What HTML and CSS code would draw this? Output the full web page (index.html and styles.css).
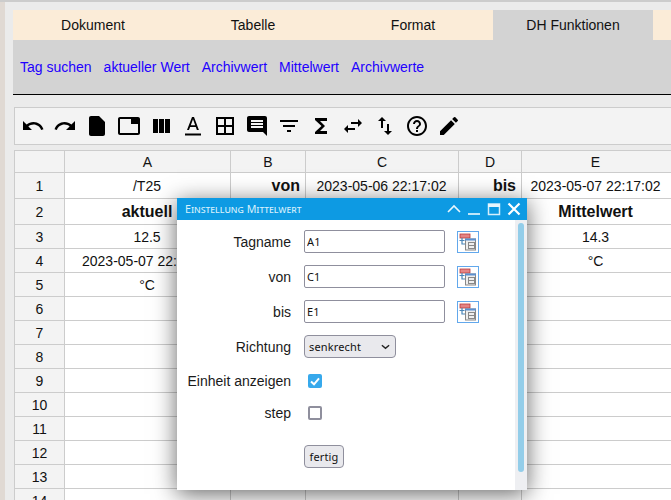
FILE: index.html
```html
<!DOCTYPE html>
<html lang="de">
<head>
<meta charset="utf-8">
<title>DH Funktionen</title>
<link rel="stylesheet" href="styles.css">
</head>
<body>
<div class="stripe"></div>
<main class="app">
  <nav class="tabs">
    <div class="tab">Dokument</div>
    <div class="tab">Tabelle</div>
    <div class="tab">Format</div>
    <div class="tab active">DH Funktionen</div>
  </nav>
  <div class="links">
    <a>Tag suchen</a><a>aktueller Wert</a><a>Archivwert</a><a>Mittelwert</a><a>Archivwerte</a>
  </div>
  <div class="toolbar">
    <svg class="ic" viewBox="0 0 24 24"><path d="M12.5 8c-2.65 0-5.05 1-6.9 2.6L2 7v9h9l-3.62-3.62c1.39-1.16 3.160-1.88 5.12-1.88 3.54 0 6.55 2.31 7.6 5.5l2.37-.78C21.08 11.03 17.15 8 12.5 8z"/></svg>
    <svg class="ic" viewBox="0 0 24 24"><path d="M18.4 10.6C16.55 9 14.15 8 11.5 8c-4.65 0-8.58 3.03-9.96 7.22L3.9 16c1.05-3.19 4.05-5.5 7.6-5.5 1.95 0 3.73.72 5.12 1.88L13 16h9V7l-3.6 3.6z"/></svg>
    <svg class="ic" viewBox="0 0 24 24"><path d="M14 2H6c-1.100 0-2 .9-2 2v16c0 1.100.9 2 2 2h12c1.100 0 2-.9 2-2V8l-6-6z"/></svg>
    <svg class="ic" viewBox="0 0 24 24"><path d="M21 3H3c-1.100 0-2 .9-2 2v14c0 1.100.9 2 2 2h18c1.100 0 2-.9 2-2V5c0-1.100-.9-2-2-2zm0 16H3V5h11v5h7v9z"/></svg>
    <svg class="ic" viewBox="0 0 24 24"><path d="M4 5h5v14H4zM10 5h5v14h-5zM16 5h5v14h-5z"/></svg>
    <svg class="ic" viewBox="0 0 24 24"><path d="M4 19.500h16v2H4z"/><path d="M11 3L6 16h2l1.100-3h5.700l1.100 3h2L13 3h-2zm-1.200 8.200L12 5.300l2.200 5.900H9.800z"/></svg>
    <svg class="ic" viewBox="0 0 24 24"><path d="M3 3v18h18V3H3zm8 16H5v-6h6v6zm0-8H5V5h6v6zm8 8h-6v-6h6v6zm0-8h-6V5h6v6z"/></svg>
    <svg class="ic" viewBox="0 0 24 24"><path d="M21.990 4c0-1.100-.89-2-1.990-2H4c-1.100 0-2 .9-2 2v12c0 1.100.9 2 2 2h14l4 4-.01-18zM18 14H6v-2h12v2zm0-3H6V9h12v2zm0-3H6V6h12v2z"/></svg>
    <svg class="ic" viewBox="0 0 24 24"><path d="M10 18h4v-2h-4v2zM3 6v2h18V6H3zm3 7h12v-2H6v2z"/></svg>
    <svg class="ic" viewBox="0 0 24 24"><path d="M18 4H6v2l6.500 6L6 18v2h12v-3h-7l5-5-5-5h7V4z"/></svg>
    <svg class="ic" viewBox="0 0 24 24"><path d="M6.990 11L3 15l3.990 4v-3H14v-2H6.990v-3zM21 9l-3.990-4v3H10v2h7.010v3L21 9z"/></svg>
    <svg class="ic" viewBox="0 0 24 24"><path d="M9 3L5 6.990h3V14h2V6.990h3L9 3zm7 14.010V10h-2v7.010h-3L15 21l4-3.990h-3z"/></svg>
    <svg class="ic" viewBox="0 0 24 24"><path d="M11 18h2v-2h-2v2zm1-16C6.480 2 2 6.480 2 12s4.480 10 10 10 10-4.480 10-10S17.520 2 12 2zm0 18c-4.410 0-8-3.590-8-8s3.590-8 8-8 8 3.590 8 8-3.590 8-8 8zm0-14c-2.210 0-4 1.790-4 4h2c0-1.100.9-2 2-2s2 .9 2 2c0 2-3 1.750-3 5h2c0-2.250 3-2.500 3-5 0-2.210-1.790-4-4-4z"/></svg>
    <svg class="ic" viewBox="0 0 24 24"><path d="M3 17.250V21h3.750L17.810 9.940l-3.750-3.750L3 17.250zM20.710 7.040a1 1 0 000-1.410l-2.340-2.340a1 1 0 00-1.410 0l-1.830 1.830 3.750 3.750 1.830-1.830z"/></svg>
  </div>
  <table class="sheet">
    <colgroup><col class="c0"><col class="c1"><col class="c2"><col class="c3"><col class="c4"><col class="c5"></colgroup>
    <tr class="hr"><th></th><th>A</th><th>B</th><th>C</th><th>D</th><th>E</th></tr>
    <tr class="r1"><th>1</th><td>/T25</td><td class="bold right">von</td><td>2023-05-06 22:17:02</td><td class="bold right">bis</td><td>2023-05-07 22:17:02</td></tr>
    <tr class="r2"><th>2</th><td class="bold">aktuell</td><td></td><td></td><td></td><td class="bold">Mittelwert</td></tr>
    <tr><th>3</th><td>12.5</td><td></td><td></td><td></td><td>14.3</td></tr>
    <tr><th>4</th><td>2023-05-07 22:17:02</td><td></td><td></td><td></td><td>°C</td></tr>
    <tr><th>5</th><td>°C</td><td></td><td></td><td></td><td></td></tr>
    <tr><th>6</th><td></td><td></td><td></td><td></td><td></td></tr>
    <tr><th>7</th><td></td><td></td><td></td><td></td><td></td></tr>
    <tr><th>8</th><td></td><td></td><td></td><td></td><td></td></tr>
    <tr><th>9</th><td></td><td></td><td></td><td></td><td></td></tr>
    <tr><th>10</th><td></td><td></td><td></td><td></td><td></td></tr>
    <tr><th>11</th><td></td><td></td><td></td><td></td><td></td></tr>
    <tr><th>12</th><td></td><td></td><td></td><td></td><td></td></tr>
    <tr><th>13</th><td></td><td></td><td></td><td></td><td></td></tr>
    <tr><th>14</th><td></td><td></td><td></td><td></td><td></td></tr>
  </table>
</main>
<section class="dialog">
  <header class="dlg-title">
    <span class="dlg-name">Einstellung Mittelwert</span>
    <svg class="wc" viewBox="0 0 16 16"><path d="M2 11l6-6 6 6" fill="none" stroke="#e8f6fd" stroke-width="1.600"/></svg>
    <svg class="wc" viewBox="0 0 16 16"><path d="M2 13h12" fill="none" stroke="#bfe6f9" stroke-width="2"/></svg>
    <svg class="wc" viewBox="0 0 16 16"><rect x="2.500" y="3" width="11" height="10.500" fill="none" stroke="#d5eefb" stroke-width="1.500"/><rect x="2" y="3" width="12" height="3" fill="#e8f6fd"/></svg>
    <svg class="wc" viewBox="0 0 16 16"><path d="M2.500 2.500l11 11M13.500 2.500l-11 11" fill="none" stroke="#fff" stroke-width="2.200"/></svg>
  </header>
  <div class="dlg-body">
    <form class="form">
      <label class="row"><span class="lab">Tagname</span><input class="txt" value="A1"><svg class="pick" viewBox="0 0 22 22"><use href="#pick"/></svg></label>
      <label class="row"><span class="lab">von</span><input class="txt" value="C1"><svg class="pick" viewBox="0 0 22 22"><use href="#pick"/></svg></label>
      <label class="row"><span class="lab">bis</span><input class="txt" value="E1"><svg class="pick" viewBox="0 0 22 22"><use href="#pick"/></svg></label>
      <label class="row"><span class="lab">Richtung</span><span class="sel">senkrecht<svg class="chev" viewBox="0 0 10 6"><path d="M1 1l4 3.500L9 1" fill="none" stroke="#222" stroke-width="1.600"/></svg></span></label>
      <label class="row chk"><span class="lab">Einheit anzeigen</span><span class="box on"><svg viewBox="0 0 14 14"><path d="M3 7.500l3 2.800 5-6" fill="none" stroke="#fff" stroke-width="2"/></svg></span></label>
      <label class="row chk2"><span class="lab">step</span><span class="box"></span></label>
      <div class="row act"><span class="lab"></span><button class="btn" type="button">fertig</button></div>
    </form>
    <div class="track"><div class="thumb"></div></div>
  </div>
</section>
<svg class="defs" width="0" height="0"><defs><g id="pick">
  <rect x=".5" y=".5" width="21" height="21" fill="#fff" stroke="#62a8ec"/>
  <rect x="3" y="3" width="10" height="4" fill="#e58585" stroke="#b93a3a" stroke-width=".8"/>
  <path d="M2.500 9.500h5M5 7v6h3" fill="none" stroke="#4a86b8" stroke-width="1.200"/>
  <rect x="8.500" y="8" width="10" height="11" fill="#eee" stroke="#888"/>
  <rect x="8" y="7.500" width="11" height="2" fill="#5b8fd0"/>
  <rect x="11.500" y="11.500" width="6" height="6" fill="none" stroke="#888"/>
  <path d="M11.500 14.500h6" stroke="#888" stroke-width="1"/>
</g></defs></svg>
</body>
</html>
```
FILE: styles.css
```css
html, body { margin: 0; padding: 0; height: 500px; overflow: hidden; }
body { background: #ebebeb; font-family: "Liberation Sans", Arial, sans-serif; color: #111; border-top: 2px solid #ccc; box-sizing: border-box; padding: 8px 0 0 13px; position: relative; }
.stripe { position: absolute; left: 0; top: -2px; bottom: 0; width: 5px; background: #e0d9d3; }
.app { width: 658px; }
.tabs { display: flex; height: 30px; background: #fbecd8; }
.tab { width: 160px; line-height: 30px; text-align: center; font-size: 14px; }
.tab.active { background: #d3d3d3; }
.links { height: 54px; background: #d3d3d3; border-bottom: 1px solid #000; display: flex; align-items: center; gap: 12px; padding-left: 7px; font-size: 14px; }
.links a { color: #2200ff; }
.toolbar { margin: 12px 0 0 1px; height: 36px; border: 1px solid #ccc; border-right: 0; background: #f3f3f3; display: flex; align-items: center; gap: 8px; padding-left: 6px; }
.ic { width: 24px; height: 24px; display: block; flex: none; }
.sheet { margin: 5px 0 0 1px; border-collapse: collapse; table-layout: fixed; width: 657px; background: #fff; font-size: 14px; }
.c0 { width: 50px; } .c1 { width: 166px; } .c2 { width: 75px; } .c3 { width: 153px; } .c4 { width: 63px; } .c5 { width: 150px; }
.sheet th, .sheet td { border: 1px solid #ccc; padding: 0 6px 0 5px; text-align: center; font-weight: 400; white-space: nowrap; overflow: hidden; box-sizing: border-box; }
.sheet th { padding: 0 5px; }
.sheet tr > * { height: 24px; }
.sheet th { background: #f3f3f3; font-size: 14px; }
.sheet tr.hr > * { height: 22px; background: #f3f3f3; }
.sheet tr.r1 > * { height: 26px; }
.sheet tr.r2 > * { height: 26px; }
.sheet tr > *:last-child { padding-right: 7px; }
.sheet td.bold { font-weight: 700; font-size: 16px; }
.sheet td.right { text-align: right; padding-right: 5px; }
.dialog { position: absolute; left: 177px; top: 196px; width: 350px; height: 292px; background: #fff; box-shadow: 0 4px 22px rgba(0,0,0,.6); display: flex; flex-direction: column; }
.dlg-title { height: 22px; background: #0d9ae3; display: flex; align-items: center; padding: 0 5px 0 8px; gap: 4px; flex: none; }
.dlg-name { flex: 1; color: #d8f0fc; font-family: "Noto Sans", sans-serif; font-size: 10.700px; font-variant: small-caps; }
.wc { width: 16px; height: 16px; flex: none; }
.dlg-body { flex: 1; display: flex; min-height: 0; }
.form { flex: 1; padding-top: 4px; display: flex; flex-direction: column; }
.row { display: flex; align-items: center; height: 35px; }
.row.chk { height: 33px; } .row.chk2 { height: 31px; }
.row.act { height: 57px; }
.lab { width: 114px; text-align: right; font-size: 14px; margin-right: 13px; flex: none; color: #1a1a1a; }
.txt { width: 141px; height: 23px; box-sizing: border-box; border: 1px solid #8f8f9d; border-radius: 2px; padding: 0 2px; font: 11px "Noto Sans", sans-serif; letter-spacing: .1px; color: #111; background: #fff; margin: 0; outline: 0; }
.pick { width: 22px; height: 22px; margin-left: 12px; flex: none; }
.sel { width: 92px; height: 23px; box-sizing: border-box; border: 1px solid #8f8f9d; border-radius: 4px; background: #e9e9ed; font: 11px/21px "Noto Sans", sans-serif; letter-spacing: .15px; padding: 0 5px 0 4px; display: flex; align-items: center; justify-content: space-between; }
.chev { width: 9px; height: 6px; }
.box { width: 14px; height: 14px; box-sizing: border-box; border: 2px solid #8f8f9d; border-radius: 2px; margin-left: 4px; background: #fff; display: block; }
.box.on { background: #37a9ec; border: 0; }
.box svg { display: block; width: 14px; height: 14px; }
.btn { width: 40px; height: 23px; padding: 0; border: 1px solid #8f8f9d; border-radius: 4px; background: #e9e9ed; font: 11px "Noto Sans", sans-serif; letter-spacing: .15px; color: #111; }
.track { width: 12px; flex: none; background: #eeeff2; padding: 3px 3px 0; box-sizing: border-box; }
.thumb { height: 249px; border-radius: 3px; background: #93cde9; }
.defs { position: absolute; }
```
